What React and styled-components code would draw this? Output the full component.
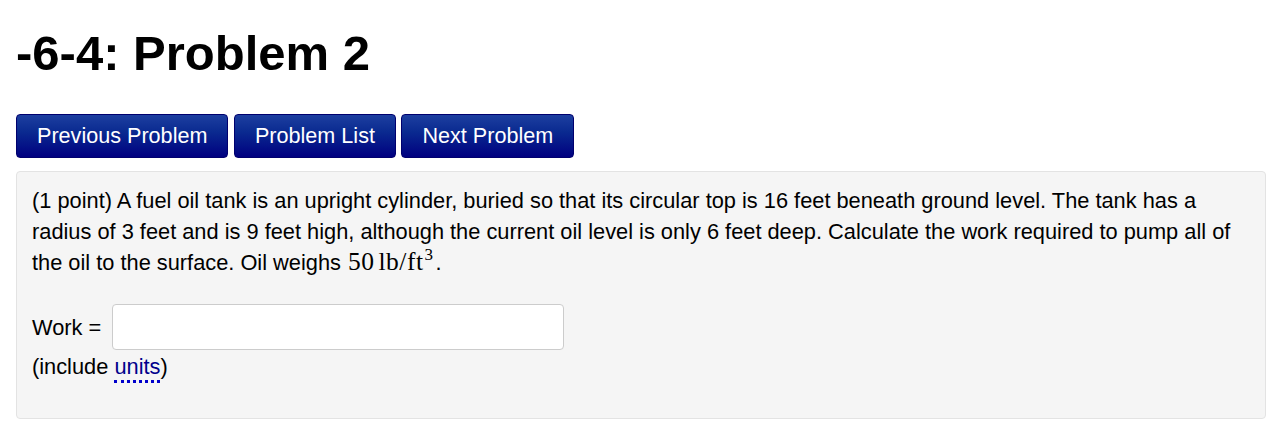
import React, { useState } from "react";
import styled, { createGlobalStyle } from "styled-components";

const GlobalStyle = createGlobalStyle`
  html, body {
    margin: 0;
    padding: 0;
    background: #fff;
  }
  body {
    font-family: "Liberation Sans", Arial, sans-serif;
    color: #000;
  }
`;

const Page = styled.div`
  padding: 0 1px 0 16px;
`;

const Title = styled.h1`
  margin: 26px 0 34px;
  font-size: 49px;
  line-height: 54px;
  font-weight: bold;
`;

const Nav = styled.div`
  display: flex;
  gap: 5.5px;
  margin-bottom: 13px;
`;

const NavButton = styled.button`
  height: 44px;
  padding: 0 20px;
  border: 1px solid #00006e;
  border-radius: 4px;
  background: linear-gradient(to bottom, #1d3fa0 0%, #0a2a90 40%, #000080 100%);
  color: #fff;
  font-family: "Liberation Sans", Arial, sans-serif;
  font-size: 21.6px;
  cursor: pointer;
`;

const Panel = styled.div`
  background: #f5f5f5;
  border: 1px solid #e3e3e3;
  border-radius: 4px;
  padding: 13px 15px 24px;
  font-size: 21.8px;
  line-height: 31px;
  min-height: 209px;
`;

const Text = styled.p`
  margin: 0 0 26px;
`;

const Math = styled.span`
  font-family: "Liberation Serif", "Times New Roman", serif;
  font-size: 25.5px;
  line-height: 0;
  margin-left: 1px;
  letter-spacing: 0.5px;
  sup {
    font-size: 17px;
    line-height: 0;
    vertical-align: 10px;
    margin-left: 1px;
    margin-right: 2px;
  }
`;

const Thin = styled.span`
  display: inline-block;
  width: 4px;
`;

const AnswerRow = styled.div`
  display: flex;
  align-items: center;
  gap: 11px;
  height: 46px;
`;

const AnswerInput = styled.input`
  box-sizing: border-box;
  width: 452px;
  height: 46px;
  border: 1px solid #cccccc;
  border-radius: 4px;
  background: #fff;
  font-size: 20px;
  padding: 0 10px;
  outline: none;
`;

const Hint = styled.div`
  margin-top: 1px;
`;

const UnitsLink = styled.a`
  color: #00008b;
  text-decoration: none;
  border-bottom: 3px dotted #0000cc;
  padding-bottom: 1px;
`;

export default function App() {
  const [work, setWork] = useState("");
  return (
    <>
      <GlobalStyle />
      <Page>
        <Title>-6-4: Problem 2</Title>
        <Nav>
          <NavButton>Previous Problem</NavButton>
          <NavButton>Problem List</NavButton>
          <NavButton>Next Problem</NavButton>
        </Nav>
        <Panel>
          <Text>
            (1 point) A fuel oil tank is an upright cylinder, buried so that its circular top is 16 feet
            beneath ground level. The tank has a radius of 3 feet and is 9 feet high, although the current
            oil level is only 6 feet deep. Calculate the work required to pump all of the oil to the
            surface. Oil weighs{" "}
            <Math>
              50
              <Thin />
              lb/ft<sup>3</sup>
            </Math>
            .
          </Text>
          <AnswerRow>
            Work =
            <AnswerInput value={work} onChange={(e) => setWork(e.target.value)} />
          </AnswerRow>
          <Hint>
            (include <UnitsLink href="#">units</UnitsLink>)
          </Hint>
        </Panel>
      </Page>
    </>
  );
}
